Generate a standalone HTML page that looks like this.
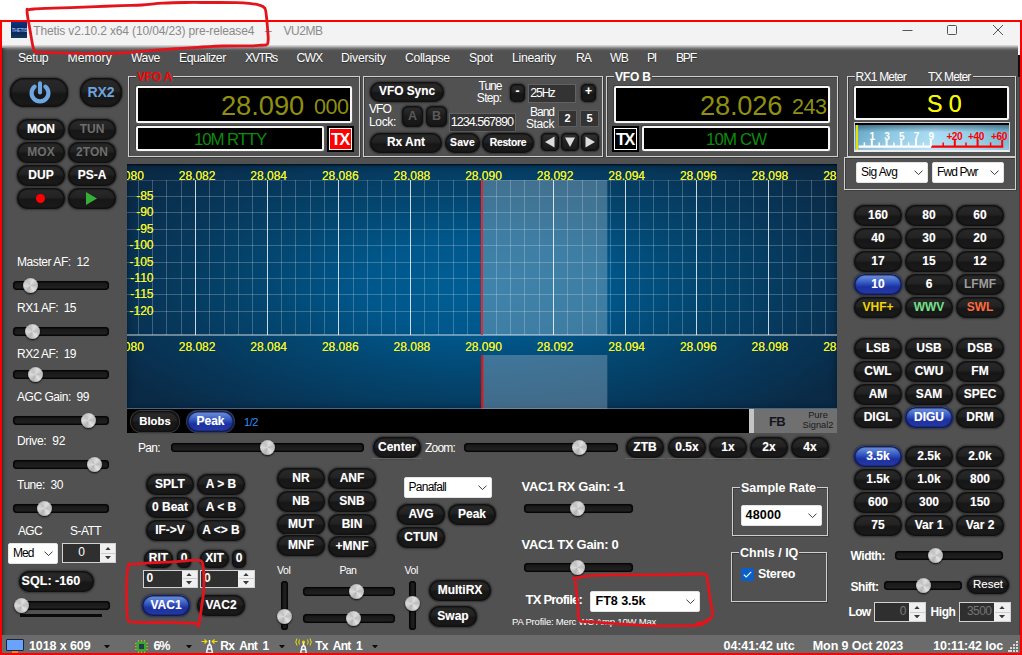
<!DOCTYPE html><html><head><meta charset="utf-8"><title>Thetis</title><style>
*{box-sizing:border-box;margin:0;padding:0}
html,body{width:1022px;height:655px;overflow:hidden;background:#fff}
body{font-family:"Liberation Sans",sans-serif;font-size:12px;color:#fff;position:relative}
.a{position:absolute}
#win{position:absolute;left:2px;top:22px;width:1018px;height:631px;background:#515151;overflow:hidden}
#frame{position:absolute;left:0;top:20px;width:1022px;height:635px;border:2px solid #fe0000;pointer-events:none}
#title{position:absolute;left:0;top:0;width:1018px;height:24px;background:#f3f3f3}
#tshadow{position:absolute;left:0;top:23px;width:1018px;height:7px;background:linear-gradient(#e6e6e6,#b4b4b4 22%,#7a7a7a 48%,#565656 75%,#515151)}
.ttext{position:absolute;top:5px;font-size:12.6px;color:#8a8a8a;white-space:nowrap}
.menu{position:absolute;top:29px;font-size:12.4px;color:#fff;white-space:nowrap;text-shadow:0 1px 1px rgba(0,0,0,.5)}
.b{position:absolute;border-radius:10.5px;background:linear-gradient(#2a2a2a 0%,#232323 44%,#161616 56%,#1b1b1b 100%);box-shadow:0 0 0 1px #383838,0 0 2px 1px rgba(30,30,30,.55),inset 0 0 1px 1.5px #101010;color:#fff;font-weight:bold;font-size:12px;text-align:center;white-space:nowrap;text-shadow:0 0 1px rgba(255,255,255,.35)}
.b.on{background:linear-gradient(#7fa0e2 0%,#5a7fd4 18%,#3258c2 42%,#1c30a0 62%,#2236a4 85%,#2c44ae 100%);box-shadow:0 0 0 1px #333a52,0 0 2px 1px rgba(20,20,40,.55),inset 0 0 1px 1.5px #131a4a}
.b.dis{color:#6e6e6e;text-shadow:none}
.b.n{font-weight:normal}
.lbl{position:absolute;white-space:nowrap;font-size:12px;color:#fff}
.bl{position:absolute;white-space:nowrap;font-size:12px;color:#fff;font-weight:bold}
.trk{position:absolute;height:9px;border-radius:4px;background:linear-gradient(#161616,#232323);box-shadow:inset 0 0 0 1.5px #070707,0 0 1px 0 #333}
.vtrk{position:absolute;width:7px;border-radius:3.5px;background:linear-gradient(90deg,#161616,#232323);box-shadow:inset 0 0 0 1.5px #070707,0 0 1px 0 #333}
.knob{position:absolute;width:15px;height:15px;border-radius:50%;background:conic-gradient(from 25deg,#dedede,#bcbcbc,#e2e2e2,#b4b4b4,#dadada,#c0c0c0,#dedede);box-shadow:0 1px 2px rgba(0,0,0,.85),inset 0 0 1px #6a6a6a}
.grp{position:absolute;border:1px solid #cfcfcf;box-shadow:inset 1px 1px 0 #3c3c3c,1px 1px 0 #3c3c3c}
.leg{position:absolute;top:-7px;background:#515151;padding:0 1px;white-space:nowrap;font-size:12px;line-height:14px}
.disp{position:absolute;background:#000;border:2px solid #f6f6f6;border-radius:2px;box-shadow:-1px -1px 0 #404040,1px 1px 0 #5e5e5e}
.combo{position:absolute;background:#fff;color:#000;font-size:12px;white-space:nowrap;border:1px solid #e4e4e4;border-radius:2px}
.combo svg{position:absolute;right:4px;top:50%;margin-top:-2.5px}
.dk{position:absolute;background:#383838;border:1px solid #8c8c8c;color:#fff;white-space:nowrap;font-size:12px}
.spin{position:absolute;background:#f0f0f0;border:1px solid #c8c8c8}
</style></head><body>
<div id="win">
<div id="title"></div><div id="tshadow"></div>
<div class="a" style="left:9px;top:0px;width:16px;height:16px;background:linear-gradient(#10337a,#0a2462 45%,#0c2a58 70%,#123a5c);"></div>
<div class="a" style="left:9.5px;top:4.5px;width:15px;height:6px;font-size:5px;line-height:6px;color:#86b4e4;font-weight:bold;letter-spacing:-.3px;overflow:hidden">THETIS</div>
<div class="a" style="left:31.299999999999997px;top:0.8999999999999986px;line-height:16px;font-size:12px;letter-spacing:-0.14px;color:#8a8a8a;white-space:pre;">Thetis v2.10.2 x64 (10/04/23) pre-release4</div>
<div class="a" style="left:263px;top:0.8999999999999986px;line-height:16px;font-size:12px;letter-spacing:1.326px;color:#8a8a8a;white-space:pre;">–</div>
<div class="a" style="left:281.5px;top:0.8999999999999986px;line-height:16px;font-size:12px;letter-spacing:-0.469px;color:#8a8a8a;white-space:pre;">VU2MB</div>
<svg class="a" style="left:895px;top:0" width="120" height="24" viewBox="0 0 120 24"><path d="M5.5 8.5 H15.5" stroke="#555" stroke-width="1" fill="none"/><rect x="50.5" y="3.5" width="9" height="9" rx="1" fill="none" stroke="#555" stroke-width="1"/><path d="M96 3 L106 13 M106 3 L96 13" stroke="#555" stroke-width="1" fill="none"/></svg>
<div class="a" style="left:16px;top:28.200000000000003px;line-height:16px;font-size:12.2px;letter-spacing:-0.302px;color:#fff;white-space:pre;text-shadow:0 1px 1px rgba(0,0,0,.45);">Setup</div>
<div class="a" style="left:65.5px;top:28.200000000000003px;line-height:16px;font-size:12.2px;letter-spacing:0.043px;color:#fff;white-space:pre;text-shadow:0 1px 1px rgba(0,0,0,.45);">Memory</div>
<div class="a" style="left:129px;top:28.200000000000003px;line-height:16px;font-size:12.2px;letter-spacing:-0.464px;color:#fff;white-space:pre;text-shadow:0 1px 1px rgba(0,0,0,.45);">Wave</div>
<div class="a" style="left:177px;top:28.200000000000003px;line-height:16px;font-size:12.2px;letter-spacing:-0.452px;color:#fff;white-space:pre;text-shadow:0 1px 1px rgba(0,0,0,.45);">Equalizer</div>
<div class="a" style="left:243px;top:28.200000000000003px;line-height:16px;font-size:12.2px;letter-spacing:-1.359px;color:#fff;white-space:pre;text-shadow:0 1px 1px rgba(0,0,0,.45);">XVTRs</div>
<div class="a" style="left:294.5px;top:28.200000000000003px;line-height:16px;font-size:12.2px;letter-spacing:-0.859px;color:#fff;white-space:pre;text-shadow:0 1px 1px rgba(0,0,0,.45);">CWX</div>
<div class="a" style="left:339px;top:28.200000000000003px;line-height:16px;font-size:12.2px;letter-spacing:-0.218px;color:#fff;white-space:pre;text-shadow:0 1px 1px rgba(0,0,0,.45);">Diversity</div>
<div class="a" style="left:403px;top:28.200000000000003px;line-height:16px;font-size:12.2px;letter-spacing:-0.333px;color:#fff;white-space:pre;text-shadow:0 1px 1px rgba(0,0,0,.45);">Collapse</div>
<div class="a" style="left:467px;top:28.200000000000003px;line-height:16px;font-size:12.2px;letter-spacing:-0.3px;color:#fff;white-space:pre;text-shadow:0 1px 1px rgba(0,0,0,.45);">Spot</div>
<div class="a" style="left:510px;top:28.200000000000003px;line-height:16px;font-size:12.2px;letter-spacing:-0.256px;color:#fff;white-space:pre;text-shadow:0 1px 1px rgba(0,0,0,.45);">Linearity</div>
<div class="a" style="left:574px;top:28.200000000000003px;line-height:16px;font-size:12.2px;letter-spacing:-1.008px;color:#fff;white-space:pre;text-shadow:0 1px 1px rgba(0,0,0,.45);">RA</div>
<div class="a" style="left:608px;top:28.200000000000003px;line-height:16px;font-size:12.2px;letter-spacing:-0.866px;color:#fff;white-space:pre;text-shadow:0 1px 1px rgba(0,0,0,.45);">WB</div>
<div class="a" style="left:645px;top:28.200000000000003px;line-height:16px;font-size:12.2px;letter-spacing:-1.287px;color:#fff;white-space:pre;text-shadow:0 1px 1px rgba(0,0,0,.45);">PI</div>
<div class="a" style="left:674px;top:28.200000000000003px;line-height:16px;font-size:12.2px;letter-spacing:-1.274px;color:#fff;white-space:pre;text-shadow:0 1px 1px rgba(0,0,0,.45);">BPF</div>
<div class="b " style="left:8px;top:56px;width:58px;height:29px;line-height:28px;border-radius:14px"></div>
<svg class="a" style="left:25.5px;top:57.8px" width="24" height="24" viewBox="0 0 24 24"><path d="M6.6 6.6 A8.4 8.4 0 1 0 17.4 6.6" fill="none" stroke="#6da6e0" stroke-width="4.2" stroke-linecap="round"/><path d="M12 3.2 V12.5" stroke="#6da6e0" stroke-width="4" fill="none" stroke-linecap="round"/></svg>
<div class="b " style="left:78px;top:56px;width:42px;height:29px;line-height:28px;border-radius:14px;color:#6fa3dc;font-size:14px;text-shadow:none">RX2</div>
<div class="b " style="left:15px;top:97px;width:48px;height:21px;line-height:20px;">MON</div>
<div class="b dis" style="left:66px;top:97px;width:48px;height:21px;line-height:20px;">TUN</div>
<div class="b dis" style="left:15px;top:120px;width:48px;height:21px;line-height:20px;">MOX</div>
<div class="b dis" style="left:66px;top:120px;width:48px;height:21px;line-height:20px;">2TON</div>
<div class="b " style="left:15px;top:143px;width:48px;height:21px;line-height:20px;">DUP</div>
<div class="b " style="left:66px;top:143px;width:48px;height:21px;line-height:20px;">PS-A</div>
<div class="b " style="left:15px;top:166px;width:48px;height:21px;line-height:20px;"></div>
<div class="b " style="left:66px;top:166px;width:48px;height:21px;line-height:20px;"></div>
<div class="a" style="left:34px;top:172px;width:9px;height:9px;background:#f00;border-radius:50%"></div>
<svg class="a" style="left:84px;top:170px" width="11" height="13" viewBox="0 0 11 13"><path d="M0 0 L11 6.5 L0 13Z" fill="#35b035"/></svg>
<div class="a" style="left:15px;top:232.0px;line-height:16px;font-size:12px;letter-spacing:-0.431px;color:#fff;white-space:pre;">Master AF:  12</div>
<div class="trk" style="left:11px;top:259.0px;width:96px"></div>
<div class="knob" style="left:21.0px;top:256.0px"></div>
<div class="a" style="left:15px;top:278.0px;line-height:16px;font-size:12px;letter-spacing:-0.518px;color:#fff;white-space:pre;">RX1 AF:  15</div>
<div class="trk" style="left:11px;top:304.5px;width:96px"></div>
<div class="knob" style="left:23.0px;top:301.5px"></div>
<div class="a" style="left:15px;top:323.5px;line-height:16px;font-size:12px;letter-spacing:-0.518px;color:#fff;white-space:pre;">RX2 AF:  19</div>
<div class="trk" style="left:11px;top:347.5px;width:96px"></div>
<div class="knob" style="left:26.0px;top:344.5px"></div>
<div class="a" style="left:15px;top:367.0px;line-height:16px;font-size:12px;letter-spacing:-0.464px;color:#fff;white-space:pre;">AGC Gain:  99</div>
<div class="trk" style="left:11px;top:394.0px;width:96px"></div>
<div class="knob" style="left:79.0px;top:391.0px"></div>
<div class="a" style="left:15px;top:411.0px;line-height:16px;font-size:12px;letter-spacing:-0.335px;color:#fff;white-space:pre;">Drive:  92</div>
<div class="trk" style="left:11px;top:438.0px;width:96px"></div>
<div class="knob" style="left:85.0px;top:435.0px"></div>
<div class="a" style="left:15px;top:454.5px;line-height:16px;font-size:12px;letter-spacing:-0.473px;color:#fff;white-space:pre;">Tune:  30</div>
<div class="trk" style="left:11px;top:481.5px;width:96px"></div>
<div class="knob" style="left:35.0px;top:478.5px"></div>
<div class="a" style="left:16px;top:500.5px;line-height:16px;font-size:12px;letter-spacing:-0.668px;color:#fff;white-space:pre;">AGC</div>
<div class="a" style="left:68px;top:500.5px;line-height:16px;font-size:12px;letter-spacing:-0.555px;color:#fff;white-space:pre;">S-ATT</div>
<div class="combo" style="left:6px;top:521px;width:50px;height:21px;line-height:19px;padding-left:4px;font-size:12px;letter-spacing:-1.015px;">Med<svg width="9" height="5.5" viewBox="0 0 9 5.5"><path d="M0.5 0.6 L4.5 4.6 L8.5 0.6" fill="none" stroke="#3c3c3c" stroke-width="1"/></svg></div>
<div class="a" style="left:60px;top:521px;width:54px;height:20px;background:#f0f0f0;border:1px solid #d2d2d2"></div>
<div class="a" style="left:61px;top:522px;width:37px;height:18px;background:#2f2f2f;color:#fff;text-align:center;line-height:17px;font-size:12px;letter-spacing:0;">0</div>
<svg class="a" style="left:102.5px;top:524.8px" width="6" height="3.4" viewBox="0 0 6 3.4"><path d="M0 3.4 L3 0 L6 3.4Z" fill="#383838"/></svg><svg class="a" style="left:102.5px;top:533.8px" width="6" height="3.4" viewBox="0 0 6 3.4"><path d="M0 0 L3 3.4 L6 0Z" fill="#383838"/></svg>
<div class="a" style="left:99px;top:530.5px;width:14px;height:1px;background:#cdcdcd"></div>
<div class="b " style="left:17px;top:549px;width:75px;height:21px;line-height:20px;text-align:left;padding-left:2.5px;font-size:12.6px">SQL: -160</div>
<div class="trk" style="left:12px;top:579.0px;width:96px"></div>
<div class="knob" style="left:12.0px;top:576.0px"></div>
<div class="a" style="left:18px;top:592px;width:82px;height:3px;background:#0a0a0a"></div>
<div class="grp" style="left:126px;top:54px;width:232px;height:81px"><div class="leg" style="left:7px;color:#f00;font-weight:bold;font-size:12px;letter-spacing:-.2px">VFO A</div></div>
<div class="disp" style="left:134px;top:64px;width:216px;height:37px"></div>
<div class="a" style="left:219px;top:75.8px;line-height:16px;font-size:27.3px;letter-spacing:-0.057px;color:#8f8f10;white-space:pre;line-height:30px;margin-top:-7px;">28.090</div>
<div class="a" style="left:312px;top:76.8px;line-height:16px;font-size:21.5px;letter-spacing:-0.457px;color:#8f8f10;white-space:pre;line-height:24px;margin-top:-4px;">000</div>
<div class="disp" style="left:134px;top:104px;width:188px;height:25px"></div>
<div class="a" style="left:192px;top:109.5px;line-height:16px;font-size:16.8px;letter-spacing:-1.084px;color:#0c8c0c;white-space:pre;line-height:20px;margin-top:-2px;">10M RTTY</div>
<div class="a" style="left:325px;top:104px;width:27px;height:26px;background:#000"></div>
<div class="a" style="left:327px;top:106px;width:23px;height:22px;background:#f00;border:1px solid #fff;color:#fff;font-weight:bold;font-size:16.5px;line-height:20px;text-align:center;letter-spacing:-1.8px;text-indent:-1.5px">TX</div>
<div class="grp" style="left:361px;top:54px;width:240px;height:81px"></div>
<div class="b " style="left:368px;top:60px;width:74px;height:20px;line-height:19px;font-size:11.86px;">VFO Sync</div>
<div class="a" style="left:476.5px;top:55.5px;line-height:16px;font-size:12px;letter-spacing:-0.977px;color:#fff;white-space:pre;">Tune</div>
<div class="a" style="left:474.8px;top:68.0px;line-height:16px;font-size:12px;letter-spacing:-0.664px;color:#fff;white-space:pre;">Step:</div>
<div class="b " style="left:508px;top:62px;width:15px;height:18px;line-height:15px;border-radius:5px">-</div>
<div class="dk" style="left:526px;top:62px;width:48px;height:19px;border-color:#626262;background:#333"></div>
<div class="a" style="left:528.2px;top:63.3px;line-height:16px;font-size:12.4px;letter-spacing:-1.123px;color:#fff;white-space:pre;">25Hz</div>
<div class="b " style="left:579px;top:62px;width:15px;height:18px;line-height:15px;border-radius:5px">+</div>
<div class="a" style="left:367px;top:79.0px;line-height:16px;font-size:12px;letter-spacing:-0.889px;color:#fff;white-space:pre;">VFO</div>
<div class="a" style="left:367px;top:92.0px;line-height:16px;font-size:12px;letter-spacing:-0.336px;color:#fff;white-space:pre;">Lock:</div>
<div class="b dis" style="left:400px;top:84px;width:21px;height:21px;line-height:20px;border-radius:6px;font-size:12.5px;color:#5a5a5a;background:linear-gradient(#303030,#1c1c1c 50%,#161616)">A</div>
<div class="b dis" style="left:424px;top:84px;width:21px;height:21px;line-height:20px;border-radius:6px;font-size:12.5px;color:#5a5a5a;background:linear-gradient(#303030,#1c1c1c 50%,#161616)">B</div>
<div class="dk" style="left:446.7px;top:90.5px;width:67.5px;height:19px;border-color:#626262;background:#343434;overflow:hidden"></div>
<div class="a" style="left:448.8px;top:92.3px;line-height:16px;font-size:12.6px;letter-spacing:-1.029px;color:#fff;white-space:pre;">1234.567890</div>
<div class="a" style="left:528px;top:82.0px;line-height:16px;font-size:12px;letter-spacing:-1.006px;color:#fff;white-space:pre;">Band</div>
<div class="a" style="left:524px;top:94.0px;line-height:16px;font-size:12px;letter-spacing:-0.402px;color:#fff;white-space:pre;">Stack</div>
<div class="dk" style="left:556px;top:88px;width:19px;height:17px;line-height:15px;text-align:center;font-weight:bold;font-size:11px;border-color:#5c5c5c;background:#333">2</div>
<div class="dk" style="left:578px;top:88px;width:19px;height:17px;line-height:15px;text-align:center;font-weight:bold;font-size:11px;border-color:#5c5c5c;background:#333">5</div>
<div class="b " style="left:368px;top:111px;width:72px;height:20px;line-height:19px;font-size:11.93px;">Rx Ant</div>
<div class="b " style="left:443px;top:111px;width:35px;height:20px;line-height:19px;font-size:10.4px;letter-spacing:0.143px">Save</div>
<div class="b " style="left:480px;top:111px;width:52px;height:20px;line-height:19px;font-size:10.4px;letter-spacing:-0.304px">Restore</div>
<div class="b " style="left:539px;top:111px;width:18px;height:18px;line-height:18px;border-radius:5px;background:linear-gradient(#343434,#222 50%,#1a1a1a)"></div>
<svg class="a" style="left:542px;top:114px" width="12" height="12" viewBox="0 0 12 12"><path d="M10.5 0.5 L1 6 L10.5 11.5Z" fill="#dcdcdc"/></svg>
<div class="b " style="left:559px;top:111px;width:18px;height:18px;line-height:18px;border-radius:5px;background:linear-gradient(#343434,#222 50%,#1a1a1a)"></div>
<svg class="a" style="left:562px;top:114px" width="12" height="12" viewBox="0 0 12 12"><path d="M1 1.5 L11 1.5 L6 11Z" fill="#dcdcdc"/></svg>
<div class="b " style="left:579px;top:111px;width:18px;height:18px;line-height:18px;border-radius:5px;background:linear-gradient(#343434,#222 50%,#1a1a1a)"></div>
<svg class="a" style="left:582px;top:114px" width="12" height="12" viewBox="0 0 12 12"><path d="M1.5 0.5 L11 6 L1.5 11.5Z" fill="#dcdcdc"/></svg>
<div class="grp" style="left:604px;top:54px;width:232px;height:81px"><div class="leg" style="left:7px;color:#fff;font-weight:bold;font-size:12px;letter-spacing:-.2px">VFO B</div></div>
<div class="disp" style="left:612px;top:64px;width:216px;height:37px"></div>
<div class="a" style="left:698px;top:75.8px;line-height:16px;font-size:27.3px;letter-spacing:-0.224px;color:#8f8f10;white-space:pre;line-height:30px;margin-top:-7px;">28.026</div>
<div class="a" style="left:790px;top:76.8px;line-height:16px;font-size:21.5px;letter-spacing:-0.457px;color:#8f8f10;white-space:pre;line-height:24px;margin-top:-4px;">243</div>
<div class="disp" style="left:640px;top:104px;width:188px;height:25px"></div>
<div class="a" style="left:704px;top:109.5px;line-height:16px;font-size:16.8px;letter-spacing:-0.857px;color:#0c8c0c;white-space:pre;line-height:20px;margin-top:-2px;">10M CW</div>
<div class="a" style="left:610px;top:104px;width:27px;height:26px;background:#000"></div>
<div class="a" style="left:612px;top:106px;width:23px;height:22px;background:#000;border:1px solid #fff;color:#fff;font-weight:bold;font-size:16.5px;line-height:20px;text-align:center;letter-spacing:-1.8px;text-indent:-1.5px">TX</div>
<div class="grp" style="left:845px;top:54px;width:169px;height:81px"><div class="leg" style="left:7px;width:118px;height:14px"></div></div>
<div class="a" style="left:853.5px;top:46.5px;line-height:16px;font-size:12px;letter-spacing:-0.761px;color:#fff;white-space:pre;">RX1 Meter</div>
<div class="a" style="left:926px;top:46.5px;line-height:16px;font-size:12px;letter-spacing:-0.855px;color:#fff;white-space:pre;">TX Meter</div>
<div class="disp" style="left:852px;top:64px;width:155px;height:34px"></div>
<div class="a" style="left:925px;top:74.0px;line-height:16px;font-size:23.2px;letter-spacing:-0.132px;color:#f6f600;white-space:pre;line-height:26px;margin-top:-5px;text-shadow:0 0 .5px #f6f600;">S 0</div>
<div class="a" style="left:852px;top:100px;width:155.5px;height:30px;border:1px solid #d4d4d4;border-bottom:2px solid #ececec;background:linear-gradient(90deg,#68a8c6 0%,#8fc9e4 25%,#a9dcf4 52%,#92cce6 78%,#72b2ce 100%);overflow:hidden"><div class="a" style="left:0;top:0;width:100%;height:100%;background:linear-gradient(#000 0,#000 2px,rgba(20,50,70,.5) 2px,rgba(255,255,255,0) 9px,rgba(255,255,255,.08) 70%,rgba(255,255,255,.22))"></div><div class="a" style="left:1px;top:2px;width:2px;height:25px;background:#e8e000"></div><svg class="a" style="left:0;top:0" width="154" height="28" viewBox="0 0 154 28"><path d="M3.5 23.6 H76" stroke="#fff" stroke-width="2.4"/><path d="M76 23.6 H148.3" stroke="#f00" stroke-width="2.4"/><path d="M16.8 23.6 V16.6" stroke="#fff" stroke-width="2"/><path d="M9.4 23.6 V19.400000000000002" stroke="#fff" stroke-width="1.5"/><text x="17.400000000000002" y="16.5" font-family="Liberation Sans" font-weight="bold" font-size="10.2" fill="#fff" text-anchor="middle">1</text><path d="M31.6 23.6 V16.6" stroke="#fff" stroke-width="2"/><path d="M24.200000000000003 23.6 V19.400000000000002" stroke="#fff" stroke-width="1.5"/><text x="32.2" y="16.5" font-family="Liberation Sans" font-weight="bold" font-size="10.2" fill="#fff" text-anchor="middle">3</text><path d="M46.3 23.6 V16.6" stroke="#fff" stroke-width="2"/><path d="M38.9 23.6 V19.400000000000002" stroke="#fff" stroke-width="1.5"/><text x="46.9" y="16.5" font-family="Liberation Sans" font-weight="bold" font-size="10.2" fill="#fff" text-anchor="middle">5</text><path d="M61.0 23.6 V16.6" stroke="#fff" stroke-width="2"/><path d="M53.6 23.6 V19.400000000000002" stroke="#fff" stroke-width="1.5"/><text x="61.6" y="16.5" font-family="Liberation Sans" font-weight="bold" font-size="10.2" fill="#fff" text-anchor="middle">7</text><path d="M75.8 23.6 V16.6" stroke="#fff" stroke-width="2"/><path d="M68.39999999999999 23.6 V19.400000000000002" stroke="#fff" stroke-width="1.5"/><text x="76.39999999999999" y="16.5" font-family="Liberation Sans" font-weight="bold" font-size="10.2" fill="#fff" text-anchor="middle">9</text><path d="M99.8 23.6 V16.6" stroke="#f00" stroke-width="2"/><path d="M88.2 23.6 V19.400000000000002" stroke="#f00" stroke-width="1.5"/><text x="99.3" y="16.5" font-family="Liberation Sans" font-weight="bold" font-size="10.2" fill="#f00" text-anchor="middle" letter-spacing="-.5">+20</text><path d="M122.6 23.6 V16.6" stroke="#f00" stroke-width="2"/><path d="M111.0 23.6 V19.400000000000002" stroke="#f00" stroke-width="1.5"/><text x="121" y="16.5" font-family="Liberation Sans" font-weight="bold" font-size="10.2" fill="#f00" text-anchor="middle" letter-spacing="-.5">+40</text><path d="M147.2 23.6 V16.6" stroke="#f00" stroke-width="2"/><path d="M135.6 23.6 V19.400000000000002" stroke="#f00" stroke-width="1.5"/><text x="144" y="16.5" font-family="Liberation Sans" font-weight="bold" font-size="10.2" fill="#f00" text-anchor="middle" letter-spacing="-.5">+60</text></svg></div>
<div class="grp" style="left:842px;top:135px;width:172px;height:33px"></div>
<div class="combo" style="left:854px;top:140px;width:72px;height:21px;line-height:19px;padding-left:4px;font-size:12px;letter-spacing:-0.597px;">Sig Avg<svg width="9" height="5.5" viewBox="0 0 9 5.5"><path d="M0.5 0.6 L4.5 4.6 L8.5 0.6" fill="none" stroke="#3c3c3c" stroke-width="1"/></svg></div>
<div class="combo" style="left:930px;top:140px;width:72px;height:21px;line-height:19px;padding-left:4px;font-size:12px;letter-spacing:-0.867px;">Fwd Pwr<svg width="9" height="5.5" viewBox="0 0 9 5.5"><path d="M0.5 0.6 L4.5 4.6 L8.5 0.6" fill="none" stroke="#3c3c3c" stroke-width="1"/></svg></div>
<div class="a" style="left:125px;top:142px;width:710px;height:245px;overflow:hidden;background:radial-gradient(ellipse 60% 72% at 50% 50%,#005f96 0%,#00578b 28%,#034670 52%,#07375a 76%,#0a2a46 100%)"><div class="a" style="left:0;top:0;width:100%;height:100%;box-shadow:inset 0 0 6px 1px rgba(4,22,40,.55),inset 0 2px 2px -1px rgba(0,0,0,.85)"></div><svg class="a" style="left:0;top:0" width="710" height="245" viewBox="0 0 710 245"><rect x="355.6" y="16" width="124.69999999999993" height="155" fill="rgba(150,180,200,.42)"/><rect x="355.6" y="191" width="124.69999999999993" height="54" fill="rgba(150,175,195,.42)"/><path d="M0 32.5 H710" stroke="rgba(255,255,255,.22)" stroke-width="1"/><path d="M0 48.5 H710" stroke="rgba(255,255,255,.22)" stroke-width="1"/><path d="M0 65.5 H710" stroke="rgba(255,255,255,.22)" stroke-width="1"/><path d="M0 81.5 H710" stroke="rgba(255,255,255,.22)" stroke-width="1"/><path d="M0 98.5 H710" stroke="rgba(255,255,255,.22)" stroke-width="1"/><path d="M0 114.5 H710" stroke="rgba(255,255,255,.22)" stroke-width="1"/><path d="M0 130.5 H710" stroke="rgba(255,255,255,.22)" stroke-width="1"/><path d="M0 147.5 H710" stroke="rgba(255,255,255,.22)" stroke-width="1"/><path d="M0 16.5 H710" stroke="rgba(255,255,255,.14)" stroke-width="1"/><path d="M11.5 16 V171" stroke="rgba(255,255,255,.22)" stroke-width="1"/><path d="M25.5 16 V171" stroke="rgba(255,255,255,.22)" stroke-width="1"/><path d="M39.5 16 V171" stroke="rgba(255,255,255,.22)" stroke-width="1"/><path d="M54.5 16 V171" stroke="rgba(255,255,255,.22)" stroke-width="1"/><path d="M68.5 16 V171" stroke="rgba(255,255,255,.8)" stroke-width="1"/><path d="M82.5 16 V171" stroke="rgba(255,255,255,.22)" stroke-width="1"/><path d="M97.5 16 V171" stroke="rgba(255,255,255,.22)" stroke-width="1"/><path d="M111.5 16 V171" stroke="rgba(255,255,255,.22)" stroke-width="1"/><path d="M125.5 16 V171" stroke="rgba(255,255,255,.22)" stroke-width="1"/><path d="M140.5 16 V171" stroke="rgba(255,255,255,.8)" stroke-width="1"/><path d="M154.5 16 V171" stroke="rgba(255,255,255,.22)" stroke-width="1"/><path d="M168.5 16 V171" stroke="rgba(255,255,255,.22)" stroke-width="1"/><path d="M183.5 16 V171" stroke="rgba(255,255,255,.22)" stroke-width="1"/><path d="M197.5 16 V171" stroke="rgba(255,255,255,.22)" stroke-width="1"/><path d="M211.5 16 V171" stroke="rgba(255,255,255,.8)" stroke-width="1"/><path d="M226.5 16 V171" stroke="rgba(255,255,255,.22)" stroke-width="1"/><path d="M240.5 16 V171" stroke="rgba(255,255,255,.22)" stroke-width="1"/><path d="M254.5 16 V171" stroke="rgba(255,255,255,.22)" stroke-width="1"/><path d="M268.5 16 V171" stroke="rgba(255,255,255,.22)" stroke-width="1"/><path d="M283.5 16 V171" stroke="rgba(255,255,255,.8)" stroke-width="1"/><path d="M297.5 16 V171" stroke="rgba(255,255,255,.22)" stroke-width="1"/><path d="M311.5 16 V171" stroke="rgba(255,255,255,.22)" stroke-width="1"/><path d="M326.5 16 V171" stroke="rgba(255,255,255,.22)" stroke-width="1"/><path d="M340.5 16 V171" stroke="rgba(255,255,255,.22)" stroke-width="1"/><path d="M369.5 16 V171" stroke="rgba(255,255,255,.22)" stroke-width="1"/><path d="M383.5 16 V171" stroke="rgba(255,255,255,.22)" stroke-width="1"/><path d="M397.5 16 V171" stroke="rgba(255,255,255,.22)" stroke-width="1"/><path d="M412.5 16 V171" stroke="rgba(255,255,255,.22)" stroke-width="1"/><path d="M426.5 16 V171" stroke="rgba(255,255,255,.8)" stroke-width="1"/><path d="M440.5 16 V171" stroke="rgba(255,255,255,.22)" stroke-width="1"/><path d="M455.5 16 V171" stroke="rgba(255,255,255,.22)" stroke-width="1"/><path d="M469.5 16 V171" stroke="rgba(255,255,255,.22)" stroke-width="1"/><path d="M483.5 16 V171" stroke="rgba(255,255,255,.22)" stroke-width="1"/><path d="M498.5 16 V171" stroke="rgba(255,255,255,.8)" stroke-width="1"/><path d="M512.5 16 V171" stroke="rgba(255,255,255,.22)" stroke-width="1"/><path d="M526.5 16 V171" stroke="rgba(255,255,255,.22)" stroke-width="1"/><path d="M541.5 16 V171" stroke="rgba(255,255,255,.22)" stroke-width="1"/><path d="M555.5 16 V171" stroke="rgba(255,255,255,.22)" stroke-width="1"/><path d="M569.5 16 V171" stroke="rgba(255,255,255,.8)" stroke-width="1"/><path d="M584.5 16 V171" stroke="rgba(255,255,255,.22)" stroke-width="1"/><path d="M598.5 16 V171" stroke="rgba(255,255,255,.22)" stroke-width="1"/><path d="M612.5 16 V171" stroke="rgba(255,255,255,.22)" stroke-width="1"/><path d="M626.5 16 V171" stroke="rgba(255,255,255,.22)" stroke-width="1"/><path d="M641.5 16 V171" stroke="rgba(255,255,255,.8)" stroke-width="1"/><path d="M655.5 16 V171" stroke="rgba(255,255,255,.22)" stroke-width="1"/><path d="M669.5 16 V171" stroke="rgba(255,255,255,.22)" stroke-width="1"/><path d="M684.5 16 V171" stroke="rgba(255,255,255,.22)" stroke-width="1"/><path d="M698.5 16 V171" stroke="rgba(255,255,255,.22)" stroke-width="1"/><path d="M0 171 H710" stroke="rgba(255,255,255,.8)" stroke-width="1.2"/><path d="M354.9 16 V171" stroke="#ff2020" stroke-width="1.8"/><path d="M355.2 191 V245" stroke="#e41414" stroke-width="2.2"/><path d="M0 244.5 H710" stroke="rgba(150,185,205,.45)" stroke-width="1"/></svg><div class="a" style="left:-31.5px;top:3.8px;width:60px;text-align:center;line-height:16px;font-size:12px;color:#f2f224;white-space:nowrap;text-shadow:0 0 .6px #f2f224">28.080</div><div class="a" style="left:40.1px;top:3.8px;width:60px;text-align:center;line-height:16px;font-size:12px;color:#f2f224;white-space:nowrap;text-shadow:0 0 .6px #f2f224">28.082</div><div class="a" style="left:111.7px;top:3.8px;width:60px;text-align:center;line-height:16px;font-size:12px;color:#f2f224;white-space:nowrap;text-shadow:0 0 .6px #f2f224">28.084</div><div class="a" style="left:183.3px;top:3.8px;width:60px;text-align:center;line-height:16px;font-size:12px;color:#f2f224;white-space:nowrap;text-shadow:0 0 .6px #f2f224">28.086</div><div class="a" style="left:254.9px;top:3.8px;width:60px;text-align:center;line-height:16px;font-size:12px;color:#f2f224;white-space:nowrap;text-shadow:0 0 .6px #f2f224">28.088</div><div class="a" style="left:326.5px;top:3.8px;width:60px;text-align:center;line-height:16px;font-size:12px;color:#f2f224;white-space:nowrap;text-shadow:0 0 .6px #f2f224">28.090</div><div class="a" style="left:398.1px;top:3.8px;width:60px;text-align:center;line-height:16px;font-size:12px;color:#f2f224;white-space:nowrap;text-shadow:0 0 .6px #f2f224">28.092</div><div class="a" style="left:469.7px;top:3.8px;width:60px;text-align:center;line-height:16px;font-size:12px;color:#f2f224;white-space:nowrap;text-shadow:0 0 .6px #f2f224">28.094</div><div class="a" style="left:541.3px;top:3.8px;width:60px;text-align:center;line-height:16px;font-size:12px;color:#f2f224;white-space:nowrap;text-shadow:0 0 .6px #f2f224">28.096</div><div class="a" style="left:612.9px;top:3.8px;width:60px;text-align:center;line-height:16px;font-size:12px;color:#f2f224;white-space:nowrap;text-shadow:0 0 .6px #f2f224">28.098</div><div class="a" style="left:684.5px;top:3.8px;width:60px;text-align:center;line-height:16px;font-size:12px;color:#f2f224;white-space:nowrap;text-shadow:0 0 .6px #f2f224">28.100</div><div class="a" style="left:-31.5px;top:175.2px;width:60px;text-align:center;line-height:16px;font-size:12px;color:#f2f224;white-space:nowrap;text-shadow:0 0 .6px #f2f224">28.080</div><div class="a" style="left:40.1px;top:175.2px;width:60px;text-align:center;line-height:16px;font-size:12px;color:#f2f224;white-space:nowrap;text-shadow:0 0 .6px #f2f224">28.082</div><div class="a" style="left:111.7px;top:175.2px;width:60px;text-align:center;line-height:16px;font-size:12px;color:#f2f224;white-space:nowrap;text-shadow:0 0 .6px #f2f224">28.084</div><div class="a" style="left:183.3px;top:175.2px;width:60px;text-align:center;line-height:16px;font-size:12px;color:#f2f224;white-space:nowrap;text-shadow:0 0 .6px #f2f224">28.086</div><div class="a" style="left:254.9px;top:175.2px;width:60px;text-align:center;line-height:16px;font-size:12px;color:#f2f224;white-space:nowrap;text-shadow:0 0 .6px #f2f224">28.088</div><div class="a" style="left:326.5px;top:175.2px;width:60px;text-align:center;line-height:16px;font-size:12px;color:#f2f224;white-space:nowrap;text-shadow:0 0 .6px #f2f224">28.090</div><div class="a" style="left:398.1px;top:175.2px;width:60px;text-align:center;line-height:16px;font-size:12px;color:#f2f224;white-space:nowrap;text-shadow:0 0 .6px #f2f224">28.092</div><div class="a" style="left:469.7px;top:175.2px;width:60px;text-align:center;line-height:16px;font-size:12px;color:#f2f224;white-space:nowrap;text-shadow:0 0 .6px #f2f224">28.094</div><div class="a" style="left:541.3px;top:175.2px;width:60px;text-align:center;line-height:16px;font-size:12px;color:#f2f224;white-space:nowrap;text-shadow:0 0 .6px #f2f224">28.096</div><div class="a" style="left:612.9px;top:175.2px;width:60px;text-align:center;line-height:16px;font-size:12px;color:#f2f224;white-space:nowrap;text-shadow:0 0 .6px #f2f224">28.098</div><div class="a" style="left:684.5px;top:175.2px;width:60px;text-align:center;line-height:16px;font-size:12px;color:#f2f224;white-space:nowrap;text-shadow:0 0 .6px #f2f224">28.100</div><div class="a" style="left:0;top:24px;width:26.5px;text-align:right;line-height:16px;font-size:12px;color:#f2f224;white-space:nowrap;text-shadow:0 0 .6px #f2f224">-85</div><div class="a" style="left:0;top:40px;width:26.5px;text-align:right;line-height:16px;font-size:12px;color:#f2f224;white-space:nowrap;text-shadow:0 0 .6px #f2f224">-90</div><div class="a" style="left:0;top:57px;width:26.5px;text-align:right;line-height:16px;font-size:12px;color:#f2f224;white-space:nowrap;text-shadow:0 0 .6px #f2f224">-95</div><div class="a" style="left:0;top:73px;width:26.5px;text-align:right;line-height:16px;font-size:12px;color:#f2f224;white-space:nowrap;text-shadow:0 0 .6px #f2f224">-100</div><div class="a" style="left:0;top:90px;width:26.5px;text-align:right;line-height:16px;font-size:12px;color:#f2f224;white-space:nowrap;text-shadow:0 0 .6px #f2f224">-105</div><div class="a" style="left:0;top:106px;width:26.5px;text-align:right;line-height:16px;font-size:12px;color:#f2f224;white-space:nowrap;text-shadow:0 0 .6px #f2f224">-110</div><div class="a" style="left:0;top:122px;width:26.5px;text-align:right;line-height:16px;font-size:12px;color:#f2f224;white-space:nowrap;text-shadow:0 0 .6px #f2f224">-115</div><div class="a" style="left:0;top:139px;width:26.5px;text-align:right;line-height:16px;font-size:12px;color:#f2f224;white-space:nowrap;text-shadow:0 0 .6px #f2f224">-120</div></div>
<div class="a" style="left:125px;top:387px;width:622px;height:24px;background:#000"></div>
<div class="a" style="left:747px;top:387px;width:5px;height:24px;background:#c4c4c4"></div>
<div class="a" style="left:752px;top:387px;width:83px;height:24px;background:#707070"></div>
<div class="a" style="left:767px;top:391.5px;line-height:16px;font-size:13px;letter-spacing:-0.665px;color:#15151f;white-space:pre;font-weight:bold;">FB</div>
<div class="a" style="left:796px;top:389px;width:40px;text-align:center;font-size:9.3px;line-height:9.8px;color:#1a1a1a">Pure<br>Signal2</div>
<div class="b " style="left:129px;top:389px;width:48px;height:21px;line-height:20px;font-size:11.3px;">Blobs</div>
<div class="b on" style="left:185px;top:389px;width:47px;height:21px;line-height:20px;">Peak</div>
<div class="a" style="left:242px;top:391.5px;line-height:16px;font-size:11px;letter-spacing:-0.43px;color:#2f8cff;white-space:pre;">1/2</div>
<div class="a" style="left:136px;top:417.5px;line-height:16px;font-size:12px;letter-spacing:-0.671px;color:#fff;white-space:pre;">Pan:</div>
<div class="trk" style="left:169px;top:421.0px;width:193px"></div>
<div class="knob" style="left:258.0px;top:418.0px"></div>
<div class="b " style="left:371px;top:415px;width:48px;height:21px;line-height:20px;">Center</div>
<div class="a" style="left:423px;top:417.5px;line-height:16px;font-size:12px;letter-spacing:-0.802px;color:#fff;white-space:pre;">Zoom:</div>
<div class="trk" style="left:462px;top:421.0px;width:154px"></div>
<div class="knob" style="left:569.5px;top:418.0px"></div>
<div class="b " style="left:624px;top:415px;width:38px;height:21px;line-height:20px;">ZTB</div>
<div class="a" style="left:623px;top:436px;width:40px;height:1px;background:#656565"></div>
<div class="b " style="left:666px;top:415px;width:38px;height:21px;line-height:20px;">0.5x</div>
<div class="a" style="left:664.5px;top:436px;width:40px;height:1px;background:#656565"></div>
<div class="b " style="left:707px;top:415px;width:38px;height:21px;line-height:20px;">1x</div>
<div class="a" style="left:706px;top:436px;width:40px;height:1px;background:#656565"></div>
<div class="b " style="left:748px;top:415px;width:38px;height:21px;line-height:20px;">2x</div>
<div class="a" style="left:747px;top:436px;width:40px;height:1px;background:#656565"></div>
<div class="b " style="left:789px;top:415px;width:38px;height:21px;line-height:20px;">4x</div>
<div class="a" style="left:787.5px;top:436px;width:40px;height:1px;background:#656565"></div>
<div class="a" style="left:370px;top:436px;width:50px;height:1px;background:#656565"></div>
<div class="b " style="left:144px;top:452px;width:48px;height:21px;line-height:20px;">SPLT</div>
<div class="b " style="left:195px;top:452px;width:48px;height:21px;line-height:20px;">A &gt; B</div>
<div class="b " style="left:144px;top:475px;width:48px;height:21px;line-height:20px;">0 Beat</div>
<div class="b " style="left:195px;top:475px;width:48px;height:21px;line-height:20px;">A &lt; B</div>
<div class="b " style="left:144px;top:498px;width:48px;height:21px;line-height:20px;">IF-&gt;V</div>
<div class="b " style="left:195px;top:498px;width:48px;height:21px;line-height:20px;">A &lt;&gt; B</div>
<div class="b " style="left:142px;top:528px;width:29px;height:18px;line-height:17px;">RIT</div>
<div class="b " style="left:175px;top:528px;width:14px;height:18px;line-height:17px;border-radius:6px">0</div>
<div class="b " style="left:198px;top:528px;width:29px;height:18px;line-height:17px;">XIT</div>
<div class="b " style="left:230px;top:528px;width:14px;height:18px;line-height:17px;border-radius:6px">0</div>
<div class="a" style="left:140.5px;top:547.5px;width:55px;height:18.5px;background:#f0f0f0;border:1px solid #d2d2d2"></div>
<div class="a" style="left:141.5px;top:548.5px;width:38px;height:16.5px;background:#2f2f2f;color:#fff;text-align:left;line-height:15.5px;font-size:12px;letter-spacing:0;font-weight:bold;padding-left:3px;">0</div>
<svg class="a" style="left:184.0px;top:550.9px" width="6" height="3.4" viewBox="0 0 6 3.4"><path d="M0 3.4 L3 0 L6 3.4Z" fill="#383838"/></svg><svg class="a" style="left:184.0px;top:559.2px" width="6" height="3.4" viewBox="0 0 6 3.4"><path d="M0 0 L3 3.4 L6 0Z" fill="#383838"/></svg>
<div class="a" style="left:180.5px;top:556.25px;width:14px;height:1px;background:#cdcdcd"></div>
<div class="a" style="left:198px;top:547.5px;width:55px;height:18.5px;background:#f0f0f0;border:1px solid #d2d2d2"></div>
<div class="a" style="left:199px;top:548.5px;width:37px;height:16.5px;background:#2f2f2f;color:#fff;text-align:left;line-height:15.5px;font-size:12px;letter-spacing:0;font-weight:bold;padding-left:3px;">0</div>
<svg class="a" style="left:241.0px;top:550.9px" width="6" height="3.4" viewBox="0 0 6 3.4"><path d="M0 3.4 L3 0 L6 3.4Z" fill="#383838"/></svg><svg class="a" style="left:241.0px;top:559.2px" width="6" height="3.4" viewBox="0 0 6 3.4"><path d="M0 0 L3 3.4 L6 0Z" fill="#383838"/></svg>
<div class="a" style="left:237px;top:556.25px;width:15px;height:1px;background:#cdcdcd"></div>
<div class="b on" style="left:140px;top:573px;width:48px;height:21px;line-height:20px;">VAC1</div>
<div class="b " style="left:195px;top:573px;width:48px;height:21px;line-height:20px;">VAC2</div>
<div class="b " style="left:275px;top:446px;width:48px;height:21px;line-height:20px;">NR</div>
<div class="b " style="left:326px;top:446px;width:48px;height:21px;line-height:20px;">ANF</div>
<div class="b " style="left:275px;top:469px;width:48px;height:21px;line-height:20px;">NB</div>
<div class="b " style="left:326px;top:469px;width:48px;height:21px;line-height:20px;">SNB</div>
<div class="b " style="left:275px;top:492px;width:48px;height:21px;line-height:20px;">MUT</div>
<div class="b " style="left:326px;top:492px;width:48px;height:21px;line-height:20px;">BIN</div>
<div class="b " style="left:275px;top:513px;width:48px;height:21px;line-height:20px;">MNF</div>
<div class="b " style="left:326px;top:514px;width:48px;height:21px;line-height:20px;">+MNF</div>
<div class="combo" style="left:402px;top:455px;width:87.5px;height:20.5px;line-height:18.5px;padding-left:3.5px;font-size:12px;letter-spacing:-0.733px;">Panafall<svg width="9" height="5.5" viewBox="0 0 9 5.5"><path d="M0.5 0.6 L4.5 4.6 L8.5 0.6" fill="none" stroke="#3c3c3c" stroke-width="1"/></svg></div>
<div class="b " style="left:395px;top:482px;width:48px;height:21px;line-height:20px;">AVG</div>
<div class="b " style="left:446px;top:482px;width:48px;height:21px;line-height:20px;">Peak</div>
<div class="b " style="left:395px;top:505px;width:48px;height:21px;line-height:20px;">CTUN</div>
<div class="a" style="left:275px;top:539.5px;line-height:16px;font-size:10.5px;letter-spacing:-0.365px;color:#fff;white-space:pre;">Vol</div>
<div class="a" style="left:337.5px;top:539.5px;line-height:16px;font-size:10.5px;letter-spacing:-0.728px;color:#fff;white-space:pre;">Pan</div>
<div class="a" style="left:402.5px;top:539.5px;line-height:16px;font-size:10.5px;letter-spacing:-0.365px;color:#fff;white-space:pre;">Vol</div>
<div class="vtrk" style="left:279.2px;top:558.5px;height:49.0px"></div>
<div class="knob" style="left:275.2px;top:586.7px"></div>
<div class="trk" style="left:300.5px;top:564.7px;width:92.5px"></div>
<div class="knob" style="left:346.7px;top:561.7px"></div>
<div class="trk" style="left:300.5px;top:591.7px;width:92.5px"></div>
<div class="knob" style="left:344.2px;top:588.7px"></div>
<div class="vtrk" style="left:406.7px;top:558.5px;height:49.0px"></div>
<div class="knob" style="left:402.7px;top:573.7px"></div>
<div class="b " style="left:427px;top:558px;width:62px;height:21px;line-height:20px;">MultiRX</div>
<div class="b " style="left:427px;top:584px;width:48px;height:21px;line-height:20px;">Swap</div>
<div class="a" style="left:519.5px;top:457.0px;line-height:16px;font-size:13px;letter-spacing:-0.275px;color:#fff;white-space:pre;font-weight:bold;">VAC1 RX Gain: -1</div>
<div class="trk" style="left:522px;top:482.2px;width:108.5px"></div>
<div class="knob" style="left:567.5px;top:479.2px"></div>
<div class="a" style="left:519.5px;top:514.5px;line-height:16px;font-size:13px;letter-spacing:-0.308px;color:#fff;white-space:pre;font-weight:bold;">VAC1 TX Gain: 0</div>
<div class="trk" style="left:522px;top:540.5px;width:108.5px"></div>
<div class="knob" style="left:568.0px;top:537.5px"></div>
<div class="a" style="left:523.5px;top:570.0px;line-height:16px;font-size:13px;letter-spacing:-0.774px;color:#fff;white-space:pre;font-weight:bold;">TX Profile:</div>
<div class="combo" style="left:588px;top:569px;width:110px;height:20.5px;line-height:18.5px;padding-left:4.5px;font-size:12.6px;font-weight:bold;letter-spacing:-0.065px;">FT8 3.5k<svg width="9" height="5.5" viewBox="0 0 9 5.5"><path d="M0.5 0.6 L4.5 4.6 L8.5 0.6" fill="none" stroke="#3c3c3c" stroke-width="1"/></svg></div>
<div class="a" style="left:510px;top:592.0px;line-height:16px;font-size:9.5px;letter-spacing:-0.202px;color:#fff;white-space:pre;">PA Profile: Merc WC Amp 10W Max</div>
<div class="grp" style="left:730px;top:465px;width:96px;height:49px"><div class="leg" style="left:7px;font-weight:bold;font-size:12.5px">Sample Rate</div></div>
<div class="combo" style="left:739px;top:483px;width:81px;height:20.5px;line-height:18.5px;padding-left:3.5px;font-size:12.6px;font-weight:bold;letter-spacing:0.139px;">48000<svg width="9" height="5.5" viewBox="0 0 9 5.5"><path d="M0.5 0.6 L4.5 4.6 L8.5 0.6" fill="none" stroke="#3c3c3c" stroke-width="1"/></svg></div>
<div class="grp" style="left:729px;top:530px;width:96px;height:50px"><div class="leg" style="left:7px;font-weight:bold;font-size:12.5px">Chnls / IQ</div></div>
<div class="a" style="left:739.3px;top:546px;width:12.5px;height:12.5px;background:#0a60c8;border-radius:2px"></div>
<svg class="a" style="left:741.3px;top:549px" width="9" height="7" viewBox="0 0 9 7"><path d="M0.8 3.6 L3.2 6 L8.2 0.8" fill="none" stroke="#fff" stroke-width="1.1"/></svg>
<div class="a" style="left:756px;top:544.0px;line-height:16px;font-size:12.5px;letter-spacing:-0.317px;color:#fff;white-space:pre;font-weight:bold;">Stereo</div>
<div class="b " style="left:852px;top:183px;width:48px;height:21px;line-height:20px;">160</div>
<div class="b " style="left:903px;top:183px;width:48px;height:21px;line-height:20px;">80</div>
<div class="b " style="left:954px;top:183px;width:48px;height:21px;line-height:20px;">60</div>
<div class="b " style="left:852px;top:206px;width:48px;height:21px;line-height:20px;">40</div>
<div class="b " style="left:903px;top:206px;width:48px;height:21px;line-height:20px;">30</div>
<div class="b " style="left:954px;top:206px;width:48px;height:21px;line-height:20px;">20</div>
<div class="b " style="left:852px;top:229px;width:48px;height:21px;line-height:20px;">17</div>
<div class="b " style="left:903px;top:229px;width:48px;height:21px;line-height:20px;">15</div>
<div class="b " style="left:954px;top:229px;width:48px;height:21px;line-height:20px;">12</div>
<div class="b on" style="left:852px;top:252px;width:48px;height:21px;line-height:20px;">10</div>
<div class="b " style="left:903px;top:252px;width:48px;height:21px;line-height:20px;">6</div>
<div class="b " style="left:954px;top:252px;width:48px;height:21px;line-height:20px;color:#9c9c9c;text-shadow:none;">LFMF</div>
<div class="b " style="left:852px;top:275px;width:48px;height:21px;line-height:20px;color:#f2d400;text-shadow:none;">VHF+</div>
<div class="b " style="left:903px;top:275px;width:48px;height:21px;line-height:20px;color:#74e08a;text-shadow:none;">WWV</div>
<div class="b " style="left:954px;top:275px;width:48px;height:21px;line-height:20px;color:#ff6a3c;text-shadow:none;">SWL</div>
<div class="b " style="left:852px;top:316px;width:48px;height:21px;line-height:20px;">LSB</div>
<div class="b " style="left:903px;top:316px;width:48px;height:21px;line-height:20px;">USB</div>
<div class="b " style="left:954px;top:316px;width:48px;height:21px;line-height:20px;">DSB</div>
<div class="b " style="left:852px;top:339px;width:48px;height:21px;line-height:20px;">CWL</div>
<div class="b " style="left:903px;top:339px;width:48px;height:21px;line-height:20px;">CWU</div>
<div class="b " style="left:954px;top:339px;width:48px;height:21px;line-height:20px;">FM</div>
<div class="b " style="left:852px;top:362px;width:48px;height:21px;line-height:20px;">AM</div>
<div class="b " style="left:903px;top:362px;width:48px;height:21px;line-height:20px;">SAM</div>
<div class="b " style="left:954px;top:362px;width:48px;height:21px;line-height:20px;">SPEC</div>
<div class="b " style="left:852px;top:385px;width:48px;height:21px;line-height:20px;">DIGL</div>
<div class="b on" style="left:903px;top:385px;width:48px;height:21px;line-height:20px;">DIGU</div>
<div class="b " style="left:954px;top:385px;width:48px;height:21px;line-height:20px;">DRM</div>
<div class="b on" style="left:852px;top:424px;width:48px;height:21px;line-height:20px;">3.5k</div>
<div class="b " style="left:903px;top:424px;width:48px;height:21px;line-height:20px;">2.5k</div>
<div class="b " style="left:954px;top:424px;width:48px;height:21px;line-height:20px;">2.0k</div>
<div class="b " style="left:852px;top:447px;width:48px;height:21px;line-height:20px;">1.5k</div>
<div class="b " style="left:903px;top:447px;width:48px;height:21px;line-height:20px;">1.0k</div>
<div class="b " style="left:954px;top:447px;width:48px;height:21px;line-height:20px;">800</div>
<div class="b " style="left:852px;top:470px;width:48px;height:21px;line-height:20px;">600</div>
<div class="b " style="left:903px;top:470px;width:48px;height:21px;line-height:20px;">300</div>
<div class="b " style="left:954px;top:470px;width:48px;height:21px;line-height:20px;">150</div>
<div class="b " style="left:852px;top:493px;width:48px;height:21px;line-height:20px;">75</div>
<div class="b " style="left:903px;top:493px;width:48px;height:21px;line-height:20px;">Var 1</div>
<div class="b " style="left:954px;top:493px;width:48px;height:21px;line-height:20px;">Var 2</div>
<div class="a" style="left:848.5px;top:526.0px;line-height:16px;font-size:12px;letter-spacing:-0.451px;color:#fff;white-space:pre;font-weight:bold;">Width:</div>
<div class="trk" style="left:893px;top:529.0px;width:108px"></div>
<div class="knob" style="left:925.5px;top:526.0px"></div>
<div class="a" style="left:848.5px;top:556.5px;line-height:16px;font-size:12px;letter-spacing:-0.443px;color:#fff;white-space:pre;font-weight:bold;">Shift:</div>
<div class="trk" style="left:882px;top:559.2px;width:77.5px"></div>
<div class="knob" style="left:914.1px;top:556.2px"></div>
<div class="b n" style="left:965px;top:554px;width:42px;height:18px;line-height:17px;font-size:11.5px;">Reset</div>
<div class="a" style="left:846.5px;top:582.0px;line-height:16px;font-size:12px;letter-spacing:-0.665px;color:#fff;white-space:pre;font-weight:bold;">Low</div>
<div class="a" style="left:872px;top:580px;width:52px;height:20px;background:#f0f0f0;border:1px solid #d2d2d2"></div>
<div class="a" style="left:873px;top:581px;width:34px;height:18px;background:#2f2f2f;color:#767c82;text-align:right;line-height:17px;font-size:12px;letter-spacing:0;padding-right:2.5px;">0</div>
<svg class="a" style="left:912.0px;top:583.8px" width="6" height="3.4" viewBox="0 0 6 3.4"><path d="M0 3.4 L3 0 L6 3.4Z" fill="#383838"/></svg><svg class="a" style="left:912.0px;top:592.8px" width="6" height="3.4" viewBox="0 0 6 3.4"><path d="M0 0 L3 3.4 L6 0Z" fill="#383838"/></svg>
<div class="a" style="left:908px;top:589.5px;width:15px;height:1px;background:#cdcdcd"></div>
<div class="a" style="left:928.5px;top:582.0px;line-height:16px;font-size:12px;letter-spacing:-0.415px;color:#fff;white-space:pre;font-weight:bold;">High</div>
<div class="a" style="left:957px;top:580px;width:52px;height:20px;background:#f0f0f0;border:1px solid #d2d2d2"></div>
<div class="a" style="left:958px;top:581px;width:34px;height:18px;background:#2f2f2f;color:#747474;text-align:right;line-height:17px;font-size:12px;letter-spacing:-.55px;padding-right:2.5px;">3500</div>
<svg class="a" style="left:997.0px;top:583.8px" width="6" height="3.4" viewBox="0 0 6 3.4"><path d="M0 3.4 L3 0 L6 3.4Z" fill="#383838"/></svg><svg class="a" style="left:997.0px;top:592.8px" width="6" height="3.4" viewBox="0 0 6 3.4"><path d="M0 0 L3 3.4 L6 0Z" fill="#383838"/></svg>
<div class="a" style="left:993px;top:589.5px;width:15px;height:1px;background:#cdcdcd"></div>
<div class="a" style="left:0px;top:613px;width:1018px;height:18px;background:#6b6b6b"></div>
<div class="a" style="left:4px;top:617px;width:18px;height:11.5px;background:#6aa2ff;border:1px solid #1c2438;border-radius:1px"></div>
<div class="a" style="left:10px;top:628.5px;width:6px;height:2px;background:#e08a30"></div>
<div class="a" style="left:27px;top:615.5px;line-height:16px;font-size:12.5px;letter-spacing:-0.105px;color:#fff;white-space:pre;font-weight:bold;">1018 x 609</div>
<svg class="a" style="left:102.2px;top:622.5px" width="6" height="3.5" viewBox="0 0 6 3.5"><path d="M0 0 L6 0 L3 3.5Z" fill="#0c0c0c"/></svg>
<svg class="a" style="left:133px;top:617.5px" width="13" height="13" viewBox="0 0 13 13"><path d="M3.5 0 V13 M6.5 0 V13 M9.5 0 V13 M0 3.5 H13 M0 6.5 H13 M0 9.5 H13" stroke="#e8a020" stroke-width="1"/><rect x="1.5" y="1.5" width="10" height="10" rx="1" fill="#35a83a"/><rect x="4" y="4" width="5" height="5" fill="#2a3a44"/></svg>
<div class="a" style="left:151.5px;top:615.5px;line-height:16px;font-size:12.5px;letter-spacing:-1.283px;color:#fff;white-space:pre;font-weight:bold;">6%</div>
<svg class="a" style="left:184.4px;top:622.5px" width="6" height="3.5" viewBox="0 0 6 3.5"><path d="M0 0 L6 0 L3 3.5Z" fill="#0c0c0c"/></svg>
<svg class="a" style="left:198.5px;top:614.5px" width="17" height="17" viewBox="0 0 17 17"><path d="M0.5 4.5 H5.5 M3.5 2.5 L5.8 4.5 L3.5 6.5 M16.5 4.5 H11.5 M13.5 2.5 L11.2 4.5 L13.5 6.5" stroke="#f0e000" stroke-width="1.1" fill="none"/><path d="M8.5 3 V8 M7 8 H10 M7.2 8 L5.5 16 M9.8 8 L11.5 16 M5 16 H12 M6.5 12 H10.5" stroke="#f6f6f6" stroke-width="1.5" fill="none"/></svg>
<div class="a" style="left:218.3px;top:615.5px;line-height:16px;font-size:12px;letter-spacing:-0.67px;color:#fff;white-space:pre;font-weight:bold;">Rx  Ant  1</div>
<svg class="a" style="left:276.6px;top:622.5px" width="6" height="3.5" viewBox="0 0 6 3.5"><path d="M0 0 L6 0 L3 3.5Z" fill="#0c0c0c"/></svg>
<svg class="a" style="left:292.5px;top:614.5px" width="17" height="17" viewBox="0 0 17 17"><path d="M2 1.5 Q-0.5 5 2 8.5 M4.5 2.5 Q3 5 4.5 7.5 M15 1.5 Q17.5 5 15 8.5 M12.5 2.5 Q14 5 12.5 7.5" stroke="#f0e000" stroke-width="1" fill="none"/><circle cx="8.5" cy="5" r="1.6" fill="#f0e000"/><path d="M8.5 6 V9 M7 9 H10 M7.2 9 L5.5 16.5 M9.8 9 L11.5 16.5 M5 16.5 H12 M6.5 12.5 H10.5" stroke="#f6f6f6" stroke-width="1.5" fill="none"/></svg>
<div class="a" style="left:313.2px;top:615.5px;line-height:16px;font-size:12px;letter-spacing:-0.676px;color:#fff;white-space:pre;font-weight:bold;">Tx  Ant  1</div>
<svg class="a" style="left:370.0px;top:622.5px" width="6" height="3.5" viewBox="0 0 6 3.5"><path d="M0 0 L6 0 L3 3.5Z" fill="#0c0c0c"/></svg>
<div class="a" style="left:721.6px;top:615.5px;line-height:16px;font-size:12.5px;letter-spacing:-0.113px;color:#fff;white-space:pre;font-weight:bold;">04:41:42 utc</div>
<div class="a" style="left:810.8px;top:615.5px;line-height:16px;font-size:12.5px;letter-spacing:-0.092px;color:#fff;white-space:pre;font-weight:bold;">Mon 9 Oct 2023</div>
<div class="a" style="left:931.2px;top:615.5px;line-height:16px;font-size:12.5px;letter-spacing:-0.073px;color:#fff;white-space:pre;font-weight:bold;">10:11:42 loc</div>
<svg class="a" style="left:1006px;top:619px" width="11" height="11" viewBox="0 0 11 11"><rect x="8" y="0" width="2" height="2" fill="#d8d8d8"/><rect x="5" y="3" width="2" height="2" fill="#d8d8d8"/><rect x="8" y="3" width="2" height="2" fill="#d8d8d8"/><rect x="2" y="6" width="2" height="2" fill="#d8d8d8"/><rect x="5" y="6" width="2" height="2" fill="#d8d8d8"/><rect x="8" y="6" width="2" height="2" fill="#d8d8d8"/><rect x="0" y="9" width="2" height="2" fill="#d8d8d8"/><rect x="2" y="9" width="2" height="2" fill="#d8d8d8"/><rect x="5" y="9" width="2" height="2" fill="#d8d8d8"/><rect x="8" y="9" width="2" height="2" fill="#d8d8d8"/></svg>
<div class="a" style="left:1016px;top:0px;width:2px;height:33px;background:#f4f4f4"></div>
<div class="a" style="left:1016px;top:33px;width:2px;height:22px;background:#0c0c0c"></div>
<div class="a" style="left:0px;top:26px;width:6px;height:587px;background:linear-gradient(90deg,rgba(28,44,46,.8),rgba(50,54,54,.35) 35%,rgba(81,81,81,0))"></div>
<div class="a" style="left:1017px;top:56px;width:1px;height:557px;background:rgba(40,60,60,.7)"></div>

</div>
<div id="frame"></div>
<svg class="a" style="left:0;top:0;pointer-events:none" width="1022" height="655" viewBox="0 0 1022 655">
<path d="M27.1 9.9 C28.2 9.8 30.9 9.2 34.0 9.0 C37.0 8.8 39.2 8.6 45.4 8.4 C51.5 8.2 62.4 7.9 70.9 7.6 C79.4 7.3 87.8 6.9 96.3 6.6 C104.8 6.3 114.2 5.9 121.8 5.6 C129.4 5.3 135.2 5.4 142.0 5.0 C148.8 4.6 155.3 3.6 162.5 3.2 C169.7 2.8 177.3 2.6 185.4 2.5 C193.5 2.4 202.3 2.5 210.8 2.5 C219.3 2.5 229.9 2.5 236.3 2.6 C242.7 2.7 245.2 2.9 249.0 3.3 C252.8 3.7 256.6 4.3 259.2 5.1 C261.8 5.9 263.6 6.4 264.8 8.1 C266.0 9.8 265.9 12.4 266.3 15.3 C266.7 18.2 267.0 21.6 267.3 25.4 C267.6 29.1 268.1 34.9 268.2 37.8 C268.3 40.7 268.1 41.8 267.8 43.0 C267.5 44.2 267.7 44.4 266.2 44.8 C264.7 45.2 261.9 45.2 259.0 45.4 C256.1 45.6 254.9 45.7 249.0 45.8 C243.1 45.9 232.1 45.8 223.6 46.0 C215.1 46.2 206.5 46.8 198.0 47.3 C189.5 47.8 181.2 48.4 172.7 49.0 C164.2 49.6 155.5 50.2 147.0 50.9 C138.5 51.5 130.3 52.4 121.8 52.9 C113.3 53.4 106.6 53.7 96.0 53.7 C85.4 53.7 67.7 53.1 58.0 52.9 C48.3 52.6 41.7 52.5 37.8 52.2 C33.9 51.9 35.6 52.2 34.8 51.2 C34.0 50.2 33.7 49.7 32.9 46.3 C32.1 42.9 31.0 35.8 30.1 30.6 C29.2 25.4 27.9 18.6 27.4 15.0 C26.9 11.4 27.1 10.2 27.0 9.2" fill="none" stroke="#e3141c" stroke-width="2.8" stroke-linecap="round" stroke-linejoin="round"/>
<path d="M128.8 564.6 C130.9 564.4 136.6 563.9 141.3 563.5 C146.0 563.1 151.8 562.8 157.0 562.5 C162.2 562.2 167.4 562.2 172.6 561.9 C177.8 561.6 184.0 560.9 188.2 560.6 C192.4 560.3 195.2 560.0 197.6 560.3 C199.9 560.6 201.2 559.5 202.3 562.2 C203.4 564.9 203.7 571.3 203.9 576.3 C204.1 581.3 204.0 586.8 203.6 592.0 C203.2 597.2 202.2 602.4 201.5 607.6 C200.8 612.8 199.8 620.0 199.2 623.2 C198.6 626.4 198.2 626.0 198.0 626.6" fill="none" stroke="#e3141c" stroke-width="2.8" stroke-linecap="round" stroke-linejoin="round"/>
<path d="M198.5 623.6 C196.8 623.5 192.5 623.1 188.2 622.9 C183.9 622.7 177.8 622.6 172.6 622.5 C167.4 622.4 162.2 622.5 157.0 622.5 C151.8 622.5 145.8 622.6 141.3 622.5 C136.9 622.4 132.6 622.4 130.3 621.7 C128.0 621.1 128.1 621.0 127.5 618.6 C126.9 616.2 127.1 612.0 126.9 607.6 C126.7 603.2 126.4 597.2 126.4 592.0 C126.4 586.8 126.6 580.5 126.9 576.3 C127.2 572.1 127.7 569.0 128.0 566.9 C128.3 564.8 128.7 564.3 128.8 563.8" fill="none" stroke="#e3141c" stroke-width="2.8" stroke-linecap="round" stroke-linejoin="round"/>
<path d="M573.3 578.5 C576.3 578.0 583.1 576.2 591.3 575.6 C599.5 575.0 612.2 575.0 622.6 574.9 C633.0 574.8 643.5 575.0 653.9 574.9 C664.3 574.8 677.4 574.6 685.2 574.4 C693.0 574.2 697.3 573.7 700.8 573.8 C704.3 573.9 705.1 573.3 706.3 574.9 C707.5 576.5 707.2 579.5 707.9 583.5 C708.5 587.5 709.4 594.1 710.2 599.1 C711.0 604.1 712.5 610.1 712.6 613.2 C712.7 616.3 712.4 616.5 711.0 617.9 C709.6 619.3 705.7 620.6 704.0 621.8 C702.3 623.0 703.9 624.2 700.8 624.9 C697.7 625.5 693.0 625.6 685.2 625.7 C677.4 625.8 664.3 626.0 653.9 625.7 C643.5 625.5 633.0 624.9 622.6 624.2 C612.2 623.6 598.5 622.4 591.3 621.8 C584.1 621.1 581.8 622.8 579.6 620.3 C577.4 617.8 578.5 611.7 578.0 606.9 C577.5 602.1 576.8 595.4 576.4 591.3 C576.0 587.1 575.7 583.5 575.6 582.0" fill="none" stroke="#e3141c" stroke-width="2.8" stroke-linecap="round" stroke-linejoin="round"/>
<path d="M697.0 623.2 C698.0 623.1 701.2 623.1 703.0 622.8 C704.8 622.5 706.8 621.8 707.5 621.6" fill="none" stroke="#e3141c" stroke-width="2.8" stroke-linecap="round" stroke-linejoin="round"/>
</svg>
</body></html>
